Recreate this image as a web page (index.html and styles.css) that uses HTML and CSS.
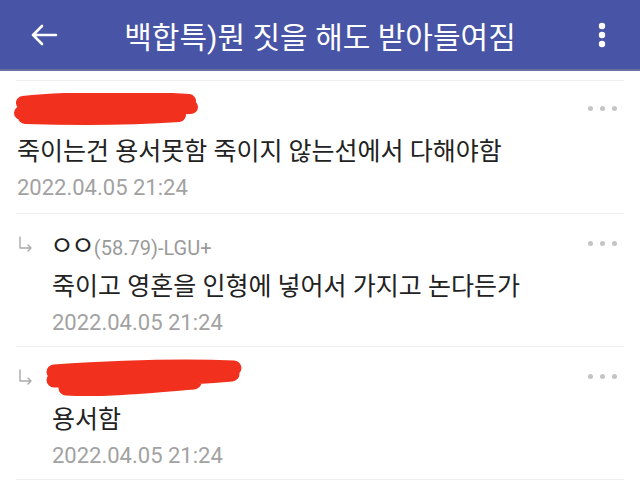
FILE: index.html
```html
<!DOCTYPE html>
<html lang="ko">

<head>
  <meta charset="UTF-8">
  <meta name="viewport" content="width=device-width, initial-scale=1.0">
  <title>백합특)뭔 짓을 해도 받아들여짐</title>
  <link rel="stylesheet" href="styles.css">
</head>

<body>
  <header class="topbar">
    <svg class="topbar__back" width="28" height="24" viewBox="0 0 28 24">
      <path d="M26 12 H3 M12 3 L3 12 L12 21" fill="none" stroke="#fff" stroke-width="2.6" stroke-linecap="round" stroke-linejoin="round"/>
    </svg>
    <h1 class="topbar__title">백합특)뭔 짓을 해도 받아들여짐</h1>
    <svg class="topbar__menu" width="8" height="26" viewBox="0 0 8 26">
      <circle cx="4" cy="4" r="3.2" fill="#fff"/>
      <circle cx="4" cy="13" r="3.2" fill="#fff"/>
      <circle cx="4" cy="22" r="3.2" fill="#fff"/>
    </svg>
  </header>

  <main class="comments">
    <div class="comment">
      <div class="comment__head">
        <svg class="scribble" width="190" height="32" viewBox="0 0 190 32">
          <path d="M12 10 C50 6 120 4 178 8 M10 20 C60 18 120 16 180 14 M14 24 C80 26 140 24 168 22" fill="none" stroke="#f2301e" stroke-width="14" stroke-linecap="round"/>
        </svg>
        <span class="more"><i></i><i></i><i></i></span>
      </div>
      <p class="comment__text">죽이는건 용서못함 죽이지 않는선에서 다해야함</p>
      <p class="comment__date">2022.04.05 21:24</p>
    </div>

    <div class="comment comment--reply">
      <svg class="reply-arrow" width="16" height="18" viewBox="0 0 16 18">
        <path d="M2 2 V13 H13 M10 10 L13 13 L10 16" fill="none" stroke="#aaa" stroke-width="1.4" stroke-linecap="round" stroke-linejoin="round"/>
      </svg>
      <div class="comment__body">
        <div class="comment__head">
          <span class="nick"><span class="nick__name">ㅇㅇ</span><span class="nick__ip">(58.79)-LGU+</span></span>
          <span class="more"><i></i><i></i><i></i></span>
        </div>
        <p class="comment__text">죽이고 영혼을 인형에 넣어서 가지고 논다든가</p>
        <p class="comment__date">2022.04.05 21:24</p>
      </div>
    </div>

    <div class="comment comment--reply">
      <svg class="reply-arrow" width="16" height="18" viewBox="0 0 16 18">
        <path d="M2 2 V13 H13 M10 10 L13 13 L10 16" fill="none" stroke="#aaa" stroke-width="1.4" stroke-linecap="round" stroke-linejoin="round"/>
      </svg>
      <div class="comment__body">
        <div class="comment__head">
          <svg class="scribble scribble--wide" width="200" height="40" viewBox="0 0 200 40">
            <path d="M10 14 C70 10 140 8 190 10 M10 22 C70 22 140 20 188 16 M22 30 C60 32 100 28 150 24" fill="none" stroke="#f2301e" stroke-width="15" stroke-linecap="round"/>
          </svg>
          <span class="more"><i></i><i></i><i></i></span>
        </div>
        <p class="comment__text">용서함</p>
        <p class="comment__date">2022.04.05 21:24</p>
      </div>
    </div>
  </main>
</body>

</html>
```

FILE: styles.css
```css
body {
  margin: 0;
  background-color: #ffffff;
  font-family: 'Roboto', 'Noto Sans CJK KR', sans-serif;
  color: #222222;
}

.topbar {
  height: 69px;
  display: flex;
  align-items: center;
  justify-content: space-between;
  padding: 0 34px 0 30px;
  background-color: #4854a5;
  border-bottom: 2px solid #6b70a3;
}

.topbar__back {
  flex: none;
}

.topbar__title {
  margin: 0 16px 0 0;
  font-size: 30px;
  font-weight: 400;
  color: #ffffff;
}

.topbar__menu {
  flex: none;
}

.comments {
  margin: 9px 16px 0;
  border-top: 1px solid #eeeeee;
}

.comment {
  height: 119px;
  padding: 13px 0 0 1px;
  border-bottom: 1px solid #eeeeee;
}

.comment--reply {
  display: flex;
  padding-left: 2px;
  padding-top: 15px;
  height: 117px;
}

.comment__body {
  flex: 1;
  margin-left: 18px;
}

.reply-arrow {
  flex: none;
  margin-top: 6px;
}

.comment__head {
  height: 28px;
  display: flex;
  align-items: center;
  justify-content: space-between;
  padding-right: 7px;
}

.scribble {
  margin: 2px 0 0 -6px;
}

.scribble--wide {
  margin: 4px 0 0 -8px;
}

.nick {
  display: flex;
  align-items: baseline;
}

.nick__name {
  font-size: 26px;
  letter-spacing: -3px;
  color: #222222;
  margin-left: -2px;
  margin-right: 2px;
}

.nick__ip {
  font-size: 20px;
  color: #9a9a9a;
}

.more {
  display: flex;
  gap: 7px;
}

.more i {
  width: 5px;
  height: 5px;
  border-radius: 50%;
  background-color: #c4c4c4;
}

.comment__text {
  margin: 12px 0 0;
  font-size: 25px;
  line-height: 36px;
  color: #222222;
}

.comment__date {
  margin: 4px 0 0;
  font-size: 22px;
  line-height: 28px;
  color: #a2a2a2;
}
```
